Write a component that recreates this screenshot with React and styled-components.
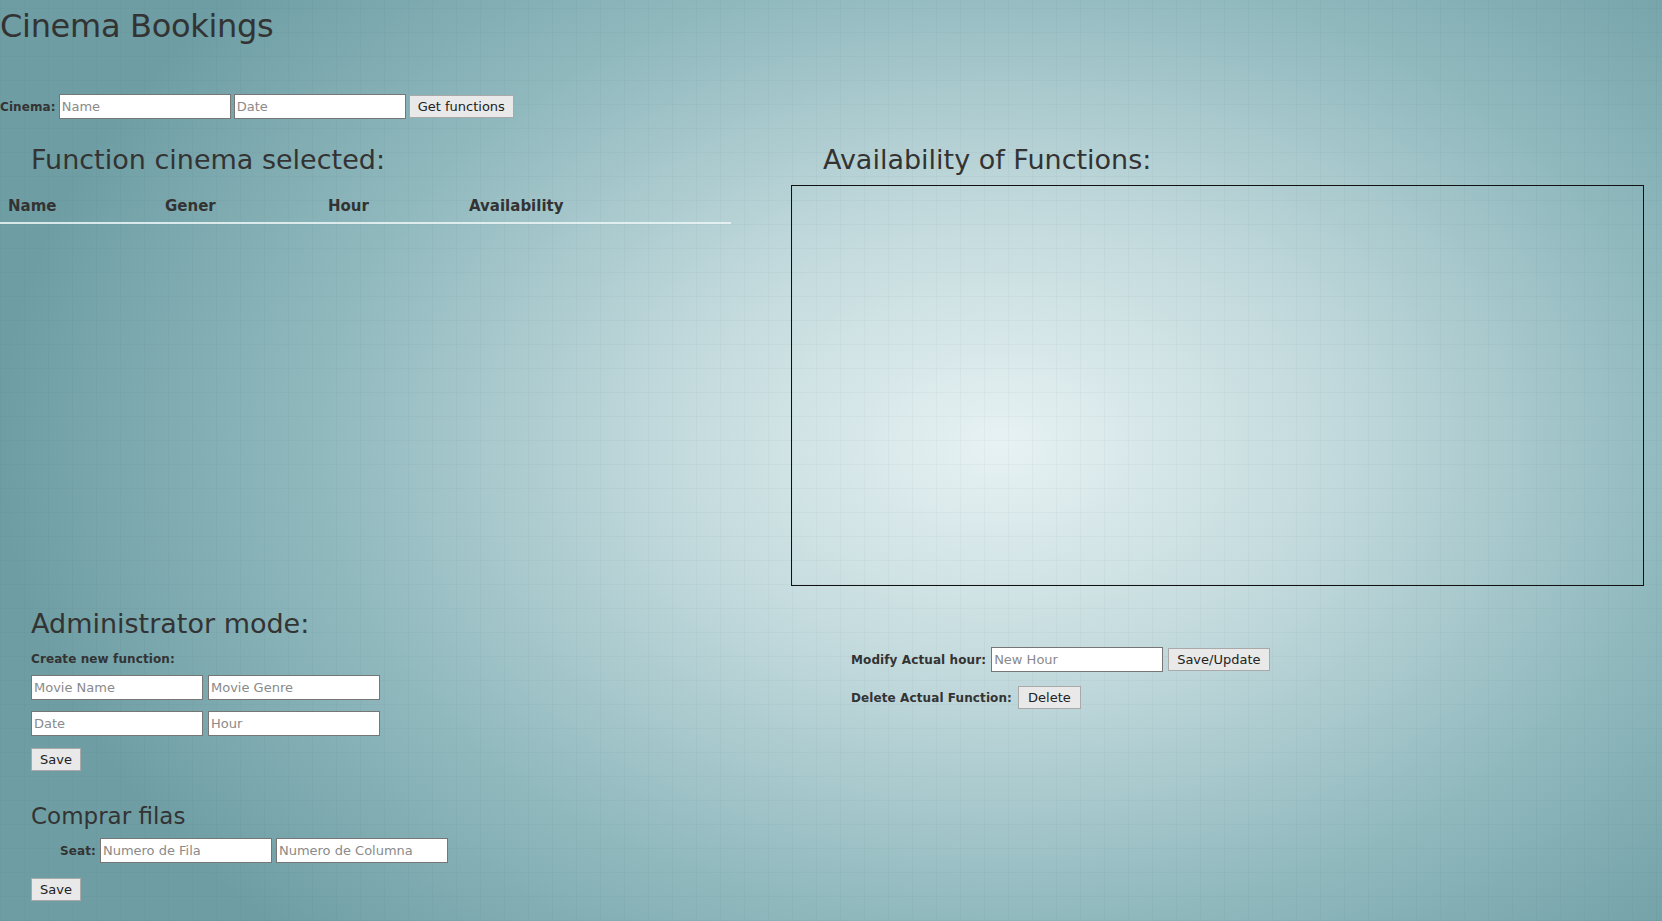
import React from 'react';
import styled, { createGlobalStyle } from 'styled-components';

const GlobalStyle = createGlobalStyle`
  html, body {
    margin: 0;
    padding: 0;
    min-height: 100%;
  }
  body {
    min-height: 921px;
    font-family: "DejaVu Sans", "Open Sans", sans-serif;
    color: #333;
    background-color: #78a7ad;
    background-image:
      repeating-linear-gradient(0deg, rgba(40, 70, 75, 0.035) 0 1px, transparent 1px 24px),
      repeating-linear-gradient(90deg, rgba(40, 70, 75, 0.035) 0 1px, transparent 1px 24px),
      radial-gradient(ellipse 1000px 700px at 1000px 445px, #e7f2f3 0%, #c3dadd 33%, #90b9be 68%, #6e9ea4 100%);
  }
`;

const Page = styled.div`
  width: 1662px;
  min-height: 921px;
`;

const Title = styled.h1`
  margin: 0;
  font-size: 32px;
  font-weight: normal;
  line-height: 52px;
  letter-spacing: -0.3px;
  color: #333;
`;

const Row = styled.div`
  display: flex;
  align-items: center;
  gap: ${({ $gap }) => $gap || 5}px;
  margin-top: ${({ $top }) => $top || 0}px;
  padding-left: ${({ $indent }) => $indent || 0}px;
`;

const Label = styled.label`
  font-size: 12px;
  font-weight: bold;
  letter-spacing: 0.1px;
  color: #333;
`;

const Input = styled.input`
  box-sizing: border-box;
  width: 172px;
  height: 25px;
  padding: 1px 2px;
  border: 1px solid #767676;
  background: #fff;
  font-family: inherit;
  font-size: 13px;
  color: #333;
  outline: none;

  &::placeholder {
    color: #8a8a8a;
  }
`;

const Button = styled.button`
  box-sizing: border-box;
  height: 23px;
  padding: 0 ${({ $pad }) => $pad || 8}px;
  border: 1px solid #a9a9a9;
  background: #e9e9e9;
  font-family: inherit;
  font-size: 13px;
  color: #222;
  cursor: pointer;
`;

const Columns = styled.div`
  display: grid;
  grid-template-columns: 731px 853px;
  column-gap: 60px;
`;

const Heading = styled.h2`
  margin: 0;
  padding-left: ${({ $indent }) => $indent || 31}px;
  font-size: 27px;
  font-weight: normal;
  line-height: 44px;
  color: #333;
`;

const SubHeading = styled(Heading)`
  margin-top: 27px;
  font-size: 23px;
  line-height: 36px;
`;

const Table = styled.table`
  width: 100%;
  table-layout: fixed;
  border-collapse: collapse;
  margin-top: 8px;
`;

const Th = styled.th`
  box-sizing: border-box;
  text-align: left;
  padding: 0 0 0 8px;
  height: 33px;
  font-size: 15px;
  font-weight: bold;
  color: #333;
  border-bottom: 2px solid rgba(235, 245, 246, 0.85);
  width: ${({ $w }) => ($w ? `${$w}px` : 'auto')};
`;

const TopSection = styled.section`
  padding-top: 19px;
`;

const AvailabilityBox = styled.div`
  margin-top: 3px;
  height: 401px;
  box-sizing: border-box;
  border: 1px solid #111;
`;

const BottomColumns = styled(Columns)`
  margin-top: 16px;
`;

const AdminLeft = styled.section``;

const AdminRight = styled.section`
  padding-top: 45px;
  padding-left: 60px;
`;

const SubLabel = styled(Label)`
  display: block;
  padding-left: 31px;
  margin-top: 6px;
`;

const Fields = styled.div`
  display: grid;
  grid-template-columns: repeat(2, 172px);
  gap: 11px 5px;
  padding-left: 31px;
  margin-top: 9px;
`;

const ButtonRow = styled.div`
  padding-left: 31px;
  margin-top: ${({ $top }) => $top || 12}px;
`;

export default function App() {
  return (
    <Page>
      <GlobalStyle />
      <Title>Cinema Bookings</Title>
      <Row $top={42} $gap={3}>
        <Label>Cinema:</Label>
        <Input placeholder="Name" />
        <Input placeholder="Date" />
        <Button $pad={8}>Get functions</Button>
      </Row>

      <Columns>
        <TopSection>
          <Heading>Function cinema selected:</Heading>
          <Table>
            <thead>
              <tr>
                <Th $w={157}>Name</Th>
                <Th $w={163}>Gener</Th>
                <Th $w={141}>Hour</Th>
                <Th>Availability</Th>
              </tr>
            </thead>
          </Table>
        </TopSection>
        <TopSection>
          <Heading $indent={32}>Availability of Functions:</Heading>
          <AvailabilityBox />
        </TopSection>
      </Columns>

      <BottomColumns>
        <AdminLeft>
          <Heading>Administrator mode:</Heading>
          <SubLabel>Create new function:</SubLabel>
          <Fields>
            <Input placeholder="Movie Name" />
            <Input placeholder="Movie Genre" />
            <Input placeholder="Date" />
            <Input placeholder="Hour" />
          </Fields>
          <ButtonRow $top={12}>
            <Button>Save</Button>
          </ButtonRow>
          <SubHeading>Comprar filas</SubHeading>
          <Row $top={4} $indent={60} $gap={4}>
            <Label>Seat:</Label>
            <Input placeholder="Numero de Fila" />
            <Input placeholder="Numero de Columna" />
          </Row>
          <ButtonRow $top={15}>
            <Button>Save</Button>
          </ButtonRow>
        </AdminLeft>
        <AdminRight>
          <Row $gap={5}>
            <Label>Modify Actual hour:</Label>
            <Input placeholder="New Hour" />
            <Button>Save/Update</Button>
          </Row>
          <Row $top={14} $gap={6}>
            <Label>Delete Actual Function:</Label>
            <Button $pad={9}>Delete</Button>
          </Row>
        </AdminRight>
      </BottomColumns>
    </Page>
  );
}
